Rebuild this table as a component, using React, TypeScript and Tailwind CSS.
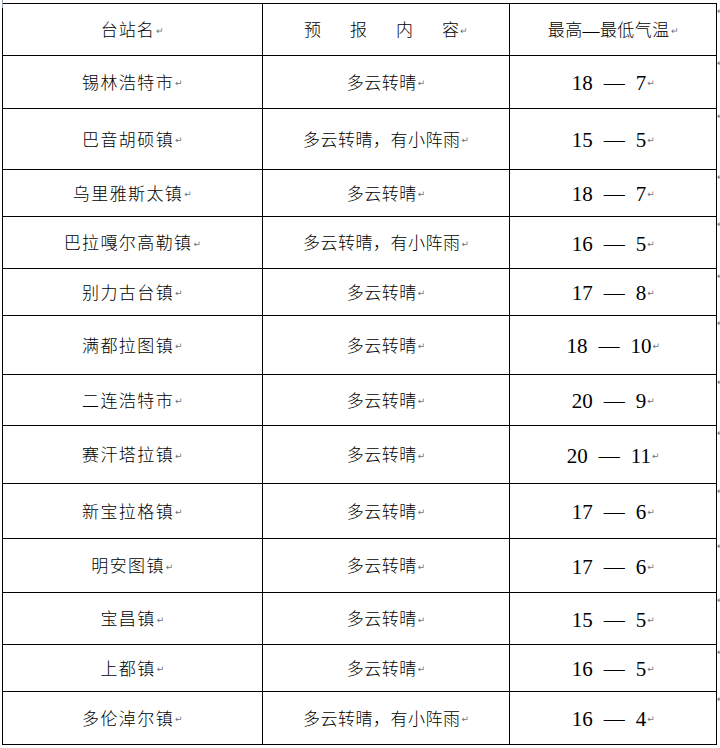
const rows: [string, string, number, number, number][] = [
  ["锡林浩特市", "多云转晴", 18, 7, 53],
  ["巴音胡硕镇", "多云转晴，有小阵雨", 15, 5, 61],
  ["乌里雅斯太镇", "多云转晴", 18, 7, 47],
  ["巴拉嘎尔高勒镇", "多云转晴，有小阵雨", 16, 5, 52],
  ["别力古台镇", "多云转晴", 17, 8, 47],
  ["满都拉图镇", "多云转晴", 18, 10, 59],
  ["二连浩特市", "多云转晴", 20, 9, 51],
  ["赛汗塔拉镇", "多云转晴", 20, 11, 58],
  ["新宝拉格镇", "多云转晴", 17, 6, 55],
  ["明安图镇", "多云转晴", 17, 6, 54],
  ["宝昌镇", "多云转晴", 15, 5, 52],
  ["上都镇", "多云转晴", 16, 5, 47],
  ["多伦淖尔镇", "多云转晴，有小阵雨", 16, 4, 53],
];

const Mark = () => (
  <span className="ml-px text-[9px] leading-none text-gray-500 font-['DejaVu_Sans',sans-serif]">
    ↵
  </span>
);

const Cell = ({ w, children }: { w: string; children: React.ReactNode }) => (
  <div
    className={`${w} flex items-center justify-center border-r border-black pt-[3px]`}
  >
    {children}
  </div>
);

export default function App() {
  return (
    <div className="relative h-[748px] w-[720px] overflow-hidden bg-white font-['Liberation_Serif','Noto_Sans_CJK_SC',serif] text-black">
      <div className="absolute left-0 top-0 h-[8px] w-[3px] border-r border-gray-400" />
      <div className="ml-[2px] mt-[3px] flex">
        <div className="w-[715px] border-l border-t border-black">
          <div className="flex h-[52px] border-b border-black text-[17px] font-light">
            <Cell w="w-[260px]">
              <span className="tracking-[1px]">台站名</span>
              <Mark />
            </Cell>
            <Cell w="w-[248px]">
              <span className="flex gap-[29px]">
                <span>预</span>
                <span>报</span>
                <span>内</span>
                <span>容</span>
              </span>
              <Mark />
            </Cell>
            <Cell w="w-[207px]">
              <span className="tracking-[0.4px]">最高—最低气温</span>
              <Mark />
            </Cell>
          </div>
          {rows.map(([name, text, hi, lo, h]) => (
            <div
              key={name}
              className="flex border-b border-black"
              style={{ height: h }}
            >
              <Cell w="w-[260px]">
                <span className="text-[17px] font-light tracking-[1.4px]">
                  {name}
                </span>
                <Mark />
              </Cell>
              <Cell w="w-[248px]">
                <span className="text-[17px] font-light tracking-[0.5px]">
                  {text}
                </span>
                <Mark />
              </Cell>
              <Cell w="w-[207px]">
                <span className="text-[21px] leading-none">
                  {hi}
                  <span className="mx-[11px]">—</span>
                  {lo}
                </span>
                <Mark />
              </Cell>
            </div>
          ))}
        </div>
        <div className="flex flex-col">
          <div className="h-[52px] pt-[4px] text-[9px] leading-none text-gray-500">↵</div>
          {rows.map(([name, , , , h]) => (
            <div
              key={name}
              className="pt-[4px] text-[9px] leading-none text-gray-500"
              style={{ height: h }}
            >
              ↵
            </div>
          ))}
        </div>
      </div>
    </div>
  );
}
